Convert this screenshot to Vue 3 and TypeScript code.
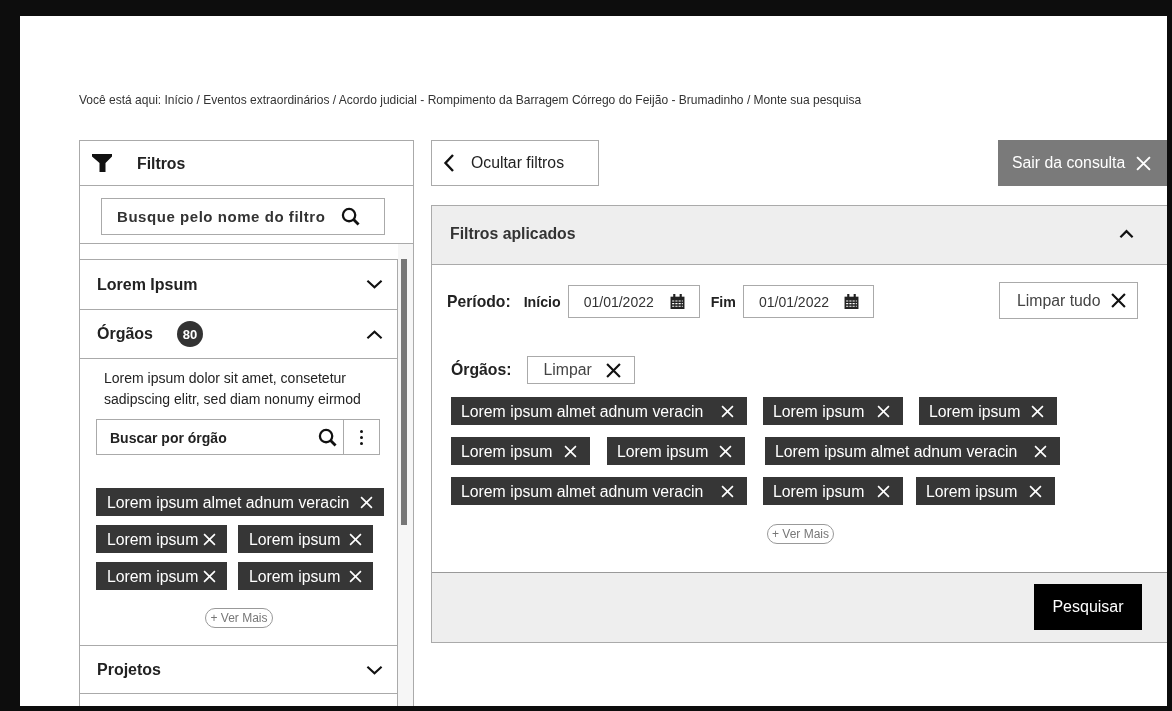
<script setup lang="ts">
interface Chip { label: string; width: number; gap: number }

const long = 'Lorem ipsum almet adnum veracin'
const short = 'Lorem ipsum'

const appliedRows: Chip[][] = [
  [{ label: long, width: 296, gap: 0 }, { label: short, width: 140, gap: 16 }, { label: short, width: 138, gap: 16 }],
  [{ label: short, width: 139, gap: 0 }, { label: short, width: 138, gap: 17 }, { label: long, width: 295, gap: 20 }],
  [{ label: long, width: 296, gap: 0 }, { label: short, width: 140, gap: 16 }, { label: short, width: 139, gap: 13 }],
]

const sideRows: Chip[][] = [
  [{ label: long, width: 288, gap: 0 }],
  [{ label: short, width: 131, gap: 0 }, { label: short, width: 135, gap: 11 }],
  [{ label: short, width: 131, gap: 0 }, { label: short, width: 135, gap: 11 }],
]
</script>

<template>
  <div class="frame">
    <p class="crumbs">Você está aqui: Início / Eventos extraordinários / Acordo judicial - Rompimento da Barragem Córrego do Feijão - Brumadinho / Monte sua pesquisa</p>

    <div class="layout">
      <aside class="side">
        <div class="side-head">
          <svg class="funnel" viewBox="0 0 20 20" width="20" height="20"><path d="M0 1h20v2.500l-6.500 6.500V19H7.500V10L0 3.500z" fill="#111" /></svg>
          <span>Filtros</span>
        </div>
        <div class="side-search">
          <div class="search-box">
            <span>Busque pelo nome do filtro</span>
            <svg class="ic" viewBox="0 0 20 20" width="19" height="19"><circle cx="8.500" cy="8.500" r="6.500" fill="none" stroke="#111" stroke-width="2.400" /><path d="M13 13l5.500 5.500" stroke="#111" stroke-width="3" /></svg>
          </div>
        </div>

        <div class="side-scroll">
          <div class="side-list">
            <div class="acc acc-first">
              <span>Lorem Ipsum</span>
              <svg class="chev" viewBox="0 0 18 10" width="17" height="10"><path d="M1.500 1.500L9 8.500l7.500-7" fill="none" stroke="#111" stroke-width="2.200" /></svg>
            </div>
            <div class="acc acc-open">
              <span>Órgãos</span>
              <span class="badge">80</span>
              <svg class="chev" viewBox="0 0 18 10" width="17" height="10"><path d="M1.500 8.500L9 1.500l7.500 7" fill="none" stroke="#111" stroke-width="2.200" /></svg>
            </div>
            <div class="acc-body">
              <p class="lorem">Lorem ipsum dolor sit amet, consetetur<br />sadipscing elitr, sed diam nonumy eirmod</p>
              <div class="org-search">
                <span class="org-label">Buscar por órgão</span>
                <svg class="org-ic" viewBox="0 0 20 20" width="19" height="19"><circle cx="8.500" cy="8.500" r="6.500" fill="none" stroke="#111" stroke-width="2.400" /><path d="M13 13l5.500 5.500" stroke="#111" stroke-width="3" /></svg>
                <div class="kebab"><i></i><i></i><i></i></div>
              </div>
              <div class="side-chips">
                <div v-for="(row, r) in sideRows" :key="r" class="chip-row">
                  <div v-for="(chip, c) in row" :key="c" class="chip chip-side" :style="{ width: chip.width + 'px', marginLeft: chip.gap + 'px' }">
                    <span>{{ chip.label }}</span>
                    <svg viewBox="0 0 12 12" width="13" height="13"><path d="M1 1l10 10M11 1L1 11" stroke="#fff" stroke-width="1.500" /></svg>
                  </div>
                </div>
              </div>
              <div class="more-wrap"><span class="more">+ Ver Mais</span></div>
            </div>
            <div class="acc acc-projetos">
              <span>Projetos</span>
              <svg class="chev" viewBox="0 0 18 10" width="17" height="10"><path d="M1.500 1.500L9 8.500l7.500-7" fill="none" stroke="#111" stroke-width="2.200" /></svg>
            </div>
            <div class="acc"></div>
          </div>
          <div class="track"><div class="thumb"></div></div>
        </div>
      </aside>

      <main class="main">
        <div class="top-row">
          <button class="hide-btn">
            <svg viewBox="0 0 12 20" width="12" height="20"><path d="M10 2L2.500 10l7.500 8" fill="none" stroke="#111" stroke-width="2.400" /></svg>
            <span>Ocultar filtros</span>
          </button>
          <button class="exit-btn">
            <span>Sair da consulta</span>
            <svg viewBox="0 0 14 14" width="15" height="15"><path d="M1 1l12 12M13 1L1 13" stroke="#fff" stroke-width="1.800" /></svg>
          </button>
        </div>

        <section class="panel">
          <header class="panel-head">
            <span>Filtros aplicados</span>
            <svg viewBox="0 0 16 10" width="15" height="10"><path d="M1.500 8.500L8 2l6.500 6.500" fill="none" stroke="#111" stroke-width="2.400" /></svg>
          </header>

          <div class="panel-body">
            <div class="period">
              <strong class="period-label">Período:</strong>
              <span class="date-label">Início</span>
              <div class="date">
                <span>01/01/2022</span>
                <svg viewBox="0 0 14 14" width="15" height="15"><path d="M0.500 2.500h13V14H0.500z" fill="#222" /><path d="M3 0h2v3H3zM9 0h2v3H9z" fill="#222" /><path d="M2 6.500h10M2 9h10M2 11.500h10" stroke="#fff" stroke-width="1" stroke-dasharray="2 1" /></svg>
              </div>
              <span class="date-label fim">Fim</span>
              <div class="date date-end">
                <span>01/01/2022</span>
                <svg viewBox="0 0 14 14" width="15" height="15"><path d="M0.500 2.500h13V14H0.500z" fill="#222" /><path d="M3 0h2v3H3zM9 0h2v3H9z" fill="#222" /><path d="M2 6.500h10M2 9h10M2 11.500h10" stroke="#fff" stroke-width="1" stroke-dasharray="2 1" /></svg>
              </div>
              <button class="clear-all">
                <span>Limpar tudo</span>
                <svg viewBox="0 0 14 14" width="15" height="15"><path d="M1 1l12 12M13 1L1 13" stroke="#111" stroke-width="2" /></svg>
              </button>
            </div>

            <div class="org-row">
              <strong class="org-title">Órgãos:</strong>
              <button class="clear">
                <span>Limpar</span>
                <svg viewBox="0 0 14 14" width="15" height="15"><path d="M1 1l12 12M13 1L1 13" stroke="#111" stroke-width="2" /></svg>
              </button>
            </div>

            <div class="main-chips">
              <div v-for="(row, r) in appliedRows" :key="r" class="chip-row">
                <div v-for="(chip, c) in row" :key="c" class="chip" :style="{ width: chip.width + 'px', marginLeft: chip.gap + 'px' }">
                  <span>{{ chip.label }}</span>
                  <svg viewBox="0 0 12 12" width="13" height="13"><path d="M1 1l10 10M11 1L1 11" stroke="#fff" stroke-width="1.500" /></svg>
                </div>
              </div>
            </div>
            <div class="more-wrap main-more"><span class="more">+ Ver Mais</span></div>
          </div>

          <footer class="panel-foot">
            <button class="go">Pesquisar</button>
          </footer>
        </section>
      </main>
    </div>
  </div>
</template>

<style>
html, body { background: #0d0d0d; overflow: hidden; }
</style>

<style scoped>
.frame { box-sizing: border-box; height: 690px; margin: 16px 5px 0 20px; padding: 77px 0 0 59px; background: #fff; overflow: hidden; font-family: 'Liberation Sans', Arial, sans-serif; color: #222; filter: blur(0.45px); }
.crumbs { margin: 0; height: 14px; font-size: 12.030px; line-height: 14px; color: #333; white-space: nowrap; }

.layout { display: flex; gap: 17px; margin-top: 33px; align-items: flex-start; }

.side { box-sizing: border-box; width: 335px; height: 580px; flex: none; border: 1px solid #aaa; border-bottom: none; }
.side-head { display: flex; align-items: center; height: 44px; border-bottom: 1px solid #aaa; font-size: 15.800px; font-weight: 700; padding-left: 12px; }
.side-head span { padding-top: 2px; }
.funnel { margin-right: 25px; }
.side-search { height: 58px; box-sizing: border-box; padding: 12px 28px 0 21px; border-bottom: 1px solid #aaa; }
.search-box { display: flex; align-items: center; justify-content: space-between; box-sizing: border-box; height: 37px; border: 1px solid #aaa; padding: 0 24px 0 15px; font-size: 15px; font-weight: 700; letter-spacing: 0.55px; color: #333; white-space: nowrap; }

.side-scroll { display: flex; }
.side-list { width: 318px; flex: none; margin-top: 15px; border-top: 1px solid #aaa; }
.acc { display: flex; align-items: center; box-sizing: border-box; height: 49px; padding-left: 17px; border-right: 1px solid #aaa; border-bottom: 1px solid #aaa; font-size: 16px; font-weight: 700; color: #222; position: relative; }
.acc-first { height: 50px; }
.chev { position: absolute; right: 14px; top: 19px; }
.acc-open .chev { top: 20px; }
.badge { display: flex; align-items: center; justify-content: center; width: 26px; height: 26px; margin-left: 24px; border-radius: 50%; background: #333; color: #fff; font-size: 13px; font-weight: 700; }
.acc-body { height: 287px; box-sizing: border-box; padding: 9px 0 0 16px; border-right: 1px solid #aaa; border-bottom: 1px solid #aaa; }
.acc-projetos { height: 48px; }
.lorem { margin: 0 0 0 8px; font-size: 14px; line-height: 21px; color: #222; white-space: nowrap; }
.org-search { display: flex; align-items: center; box-sizing: border-box; width: 284px; height: 36px; margin-top: 9px; border: 1px solid #aaa; position: relative; }
.org-label { flex: 1; padding-left: 13px; padding-top: 2px; font-size: 14px; font-weight: 700; color: #222; }
.org-ic { margin-right: 6px; }
.kebab { display: flex; flex-direction: column; align-items: center; justify-content: center; gap: 3px; width: 35px; height: 100%; border-left: 1px solid #aaa; }
.kebab i { width: 3px; height: 3px; border-radius: 50%; background: #111; }
.side-chips { display: flex; flex-direction: column; gap: 9px; margin-top: 33px; }

.track { flex: none; width: 15px; height: 462px; background: #f6f6f6; position: relative; }
.thumb { position: absolute; left: 3px; top: 15px; width: 6px; height: 266px; background: #777; }

.main { width: 736px; flex: none; }
.top-row { display: flex; justify-content: space-between; }
.hide-btn { display: flex; align-items: center; gap: 16px; box-sizing: border-box; width: 168px; height: 46px; padding: 0 0 0 11px; background: #fff; border: 1px solid #aaa; font: 15.800px 'Liberation Sans', Arial, sans-serif; color: #222; }
.exit-btn { display: flex; align-items: center; gap: 11px; box-sizing: border-box; width: 169px; height: 46px; padding: 0 0 0 14px; background: #7a7a7a; border: none; font: 15.800px 'Liberation Sans', Arial, sans-serif; color: #fff; white-space: nowrap; }

.panel { box-sizing: border-box; height: 438px; margin-top: 19px; border: 1px solid #aaa; border-right: none; display: flex; flex-direction: column; }
.panel-head { display: flex; align-items: center; justify-content: space-between; box-sizing: border-box; height: 59px; flex: none; padding: 0 33px 2px 18px; background: #eee; border-bottom: 1px solid #aaa; font-size: 15.800px; font-weight: 700; color: #333; }
.panel-body { flex: 1; position: relative; padding: 0 0 0 19px; }
.period { display: flex; align-items: center; height: 37px; margin-top: 17px; margin-left: -4px; }
.period-label { font-size: 15.700px; color: #222; margin-top: 2px; }
.date-label { margin-left: 13px; font-size: 14.200px; font-weight: 700; color: #222; margin-top: 2px; }
.fim { margin-left: 11px; }
.date { display: flex; align-items: center; justify-content: space-between; box-sizing: border-box; width: 132px; height: 33px; margin-left: 7px; margin-top: 2px; padding: 0 14px 0 15px; border: 1px solid #aaa; font-size: 14px; color: #333; }
.date-end { width: 131px; margin-left: 7px; }
.clear-all { display: flex; align-items: center; gap: 11px; box-sizing: border-box; width: 139px; height: 37px; margin-left: auto; margin-right: 29px; padding: 0 0 0 17px; background: #fff; border: 1px solid #aaa; font: 15.800px 'Liberation Sans', Arial, sans-serif; color: #444; white-space: nowrap; }
.org-row { display: flex; align-items: center; gap: 15px; margin-top: 37px; height: 28px; }
.org-title { font-size: 15.800px; color: #222; }
.clear { display: flex; align-items: center; gap: 14px; box-sizing: border-box; width: 108px; height: 28px; padding: 0 0 0 16px; background: #fff; border: 1px solid #aaa; font: 15.800px 'Liberation Sans', Arial, sans-serif; color: #444; }
.main-chips { display: flex; flex-direction: column; gap: 12px; margin-top: 13px; }
.chip-row { display: flex; }
.chip { display: flex; align-items: center; justify-content: space-between; box-sizing: border-box; height: 28px; padding: 0 13px 0 10px; background: #363636; color: #fff; font-size: 15.800px; white-space: nowrap; }
.chip span { padding-top: 2px; }
.chip-side { padding: 0 11px 0 11px; }
.more-wrap { display: flex; justify-content: center; padding-right: 15px; margin-top: 18px; }
.main-more { margin-top: 19px; padding-right: 17px; }
.more { box-sizing: border-box; height: 20px; line-height: 18px; padding: 0 4px; border: 1px solid #999; border-radius: 10px; font-size: 12px; color: #777; white-space: nowrap; }
.panel-foot { display: flex; justify-content: flex-end; align-items: flex-start; box-sizing: border-box; height: 70px; flex: none; padding: 11px 25px 0 0; background: #eee; border-top: 1px solid #999; }
.go { width: 108px; height: 46px; background: #000; border: none; color: #fff; font: 16px 'Liberation Sans', Arial, sans-serif; }
</style>
